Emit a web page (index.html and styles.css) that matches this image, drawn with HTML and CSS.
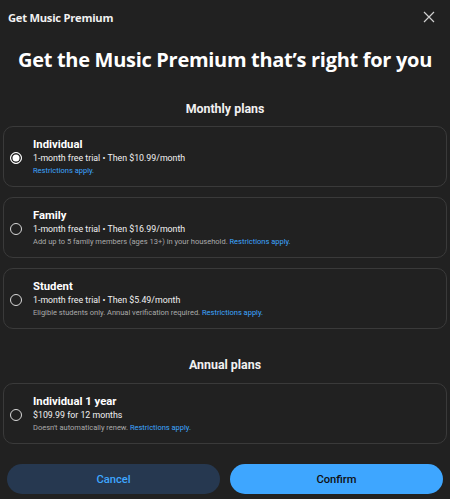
FILE: index.html
```html
<!DOCTYPE html>
<html>
<head>
<meta charset="utf-8">
<link rel="stylesheet" href="styles.css">
</head>
<body>
<div class="dialog">
  <div class="topbar">
    <span class="title">Get Music Premium</span>
    <svg class="close" width="12" height="12" viewBox="0 0 12 12"><path d="M1 1L11 11M11 1L1 11" stroke="#cfcfcf" stroke-width="1.2" fill="none"/></svg>
  </div>
  <h1 class="headline">Get the Music Premium that’s right for you</h1>
  <h2 class="section">Monthly plans</h2>
  <div class="plans">
    <div class="card">
      <span class="radio checked"></span>
      <div class="info">
        <div class="name">Individual</div>
        <div class="price">1-month free trial • Then $10.99/month</div>
        <div class="note"><a>Restrictions apply.</a></div>
      </div>
    </div>
    <div class="card">
      <span class="radio"></span>
      <div class="info">
        <div class="name">Family</div>
        <div class="price">1-month free trial • Then $16.99/month</div>
        <div class="note">Add up to 5 family members (ages 13+) in your household. <a>Restrictions apply.</a></div>
      </div>
    </div>
    <div class="card">
      <span class="radio"></span>
      <div class="info">
        <div class="name">Student</div>
        <div class="price">1-month free trial • Then $5.49/month</div>
        <div class="note">Eligible students only. Annual verification required. <a>Restrictions apply.</a></div>
      </div>
    </div>
  </div>
  <h2 class="section annual">Annual plans</h2>
  <div class="plans">
    <div class="card">
      <span class="radio"></span>
      <div class="info">
        <div class="name">Individual 1 year</div>
        <div class="price">$109.99 for 12 months</div>
        <div class="note">Doesn't automatically renew. <a>Restrictions apply.</a></div>
      </div>
    </div>
  </div>
  <div class="actions">
    <button class="btn cancel">Cancel</button>
    <button class="btn confirm">Confirm</button>
  </div>
</div>
</body>
</html>
```
FILE: styles.css
```css
html, body {
  margin: 0;
  padding: 0;
  background: #212121;
}
.dialog {
  width: 450px;
  height: 499px;
  overflow: hidden;
  font-family: Roboto, "Liberation Sans", sans-serif;
  color: #fff;
}
.topbar {
  height: 34px;
  display: flex;
  align-items: center;
  justify-content: space-between;
  padding: 0 15px 0 8px;
}
.title {
  font-family: "Open Sans", sans-serif;
  font-weight: 700;
  font-size: 11.2px;
  letter-spacing: -0.25px;
  color: #f1f1f1;
}
.close {
  display: block;
}
.headline {
  margin: 11px 0 0;
  text-align: center;
  font-family: "Open Sans", sans-serif;
  font-weight: 700;
  font-size: 20px;
  letter-spacing: -0.3px;
  line-height: 30px;
}
.section {
  margin: 26px 0 0;
  text-align: center;
  font-size: 12.4px;
  font-weight: 700;
  line-height: 16px;
  color: #f1f1f1;
}
.section.annual {
  margin-top: 28px;
}
.plans {
  margin: 9px 3px 0 3px;
  display: flex;
  flex-direction: column;
  gap: 10px;
}
.annual + .plans {
  margin-top: 10px;
}
.card {
  height: 59px;
  border: 1px solid #3a3a3a;
  border-radius: 10px;
  display: flex;
  align-items: center;
  padding: 0 0 0 6px;
}
.radio {
  width: 10px;
  height: 10px;
  border: 1.5px solid #d9d9d9;
  border-radius: 50%;
  flex: none;
  margin-right: 11px;
  margin-top: 2px;
}
.radio.checked {
  background: #fff;
  box-shadow: inset 0 0 0 1.5px #212121;
  border-color: #fff;
}
.info {
  display: flex;
  flex-direction: column;
}
.name {
  font-size: 11.3px;
  font-weight: 700;
  line-height: 15px;
}
.price {
  font-size: 8.8px;
  line-height: 13px;
  color: #f1f1f1;
}
.note {
  font-size: 7.5px;
  line-height: 12px;
  color: #aaaaaa;
}
.note a {
  color: #3ea6ff;
}
.actions {
  margin: 20px 7px 0;
  display: flex;
  gap: 10px;
}
.btn {
  flex: 1;
  height: 30px;
  border: none;
  border-radius: 15px;
  font-family: Roboto, sans-serif;
  font-size: 11.2px;
  font-weight: 500;
}
.cancel {
  background: #263850;
  color: #3ea6ff;
}
.confirm {
  background: #3ea6ff;
  color: #0f0f0f;
}
```
